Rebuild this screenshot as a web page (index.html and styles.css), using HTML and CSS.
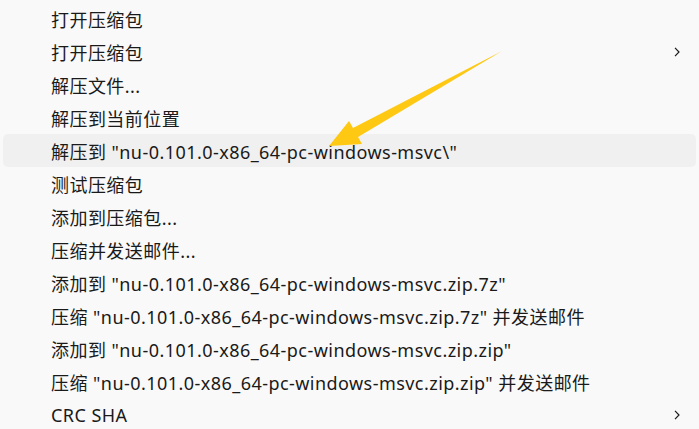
FILE: index.html
```html
<!DOCTYPE html>
<html lang="zh-CN">
<head>
<meta charset="utf-8">
<link rel="stylesheet" href="styles.css">
</head>
<body>
<div class="menu">
  <div class="item"><span class="label">打开压缩包</span></div>
  <div class="item"><span class="label">打开压缩包</span><svg class="chev" width="6" height="10" viewBox="0 0 6 10"><path d="M1 0.8 L5 5 L1 9.2" fill="none" stroke="#1b1b1b" stroke-width="1.2"/></svg></div>
  <div class="item"><span class="label">解压文件...</span></div>
  <div class="item"><span class="label">解压到当前位置</span></div>
  <div class="item hover"><span class="label">解压到 "nu-0.101.0-x86_64-pc-windows-msvc\"</span></div>
  <div class="item"><span class="label">测试压缩包</span></div>
  <div class="item"><span class="label">添加到压缩包...</span></div>
  <div class="item"><span class="label">压缩并发送邮件...</span></div>
  <div class="item"><span class="label">添加到 "nu-0.101.0-x86_64-pc-windows-msvc.zip.7z"</span></div>
  <div class="item"><span class="label">压缩 "nu-0.101.0-x86_64-pc-windows-msvc.zip.7z" 并发送邮件</span></div>
  <div class="item"><span class="label">添加到 "nu-0.101.0-x86_64-pc-windows-msvc.zip.zip"</span></div>
  <div class="item"><span class="label">压缩 "nu-0.101.0-x86_64-pc-windows-msvc.zip.zip" 并发送邮件</span></div>
  <div class="item"><span class="label">CRC SHA</span><svg class="chev" width="6" height="10" viewBox="0 0 6 10"><path d="M1 0.8 L5 5 L1 9.2" fill="none" stroke="#1b1b1b" stroke-width="1.2"/></svg></div>
</div>
<svg class="arrow" width="699" height="429" viewBox="0 0 699 429">
  <polygon points="502,51 353,128 349,121 329,146 362,144 358,137" fill="#ffc812"/>
</svg>
</body>
</html>
```
FILE: styles.css
```css
html, body {
  margin: 0;
  padding: 0;
  background: #f9f9f9;
  width: 699px;
  height: 429px;
  overflow: hidden;
}
body {
  position: relative;
  font-family: "Noto Sans", "Noto Sans CJK SC", sans-serif;
  font-size: 18px;
  letter-spacing: 0.45px;
  color: #1a1a1a;
}
.menu {
  display: flex;
  flex-direction: column;
  padding: 2px 3px 0 3px;
}
.item {
  height: 33px;
  display: flex;
  align-items: center;
  padding-left: 48px;
  padding-right: 16px;
  border-radius: 5px;
}
.item.hover {
  background: #f0f0f0;
}
.label {
  flex: 1;
  white-space: nowrap;
}
.chev {
  display: block;
}
.arrow {
  position: absolute;
  left: 0;
  top: 0;
}
```
